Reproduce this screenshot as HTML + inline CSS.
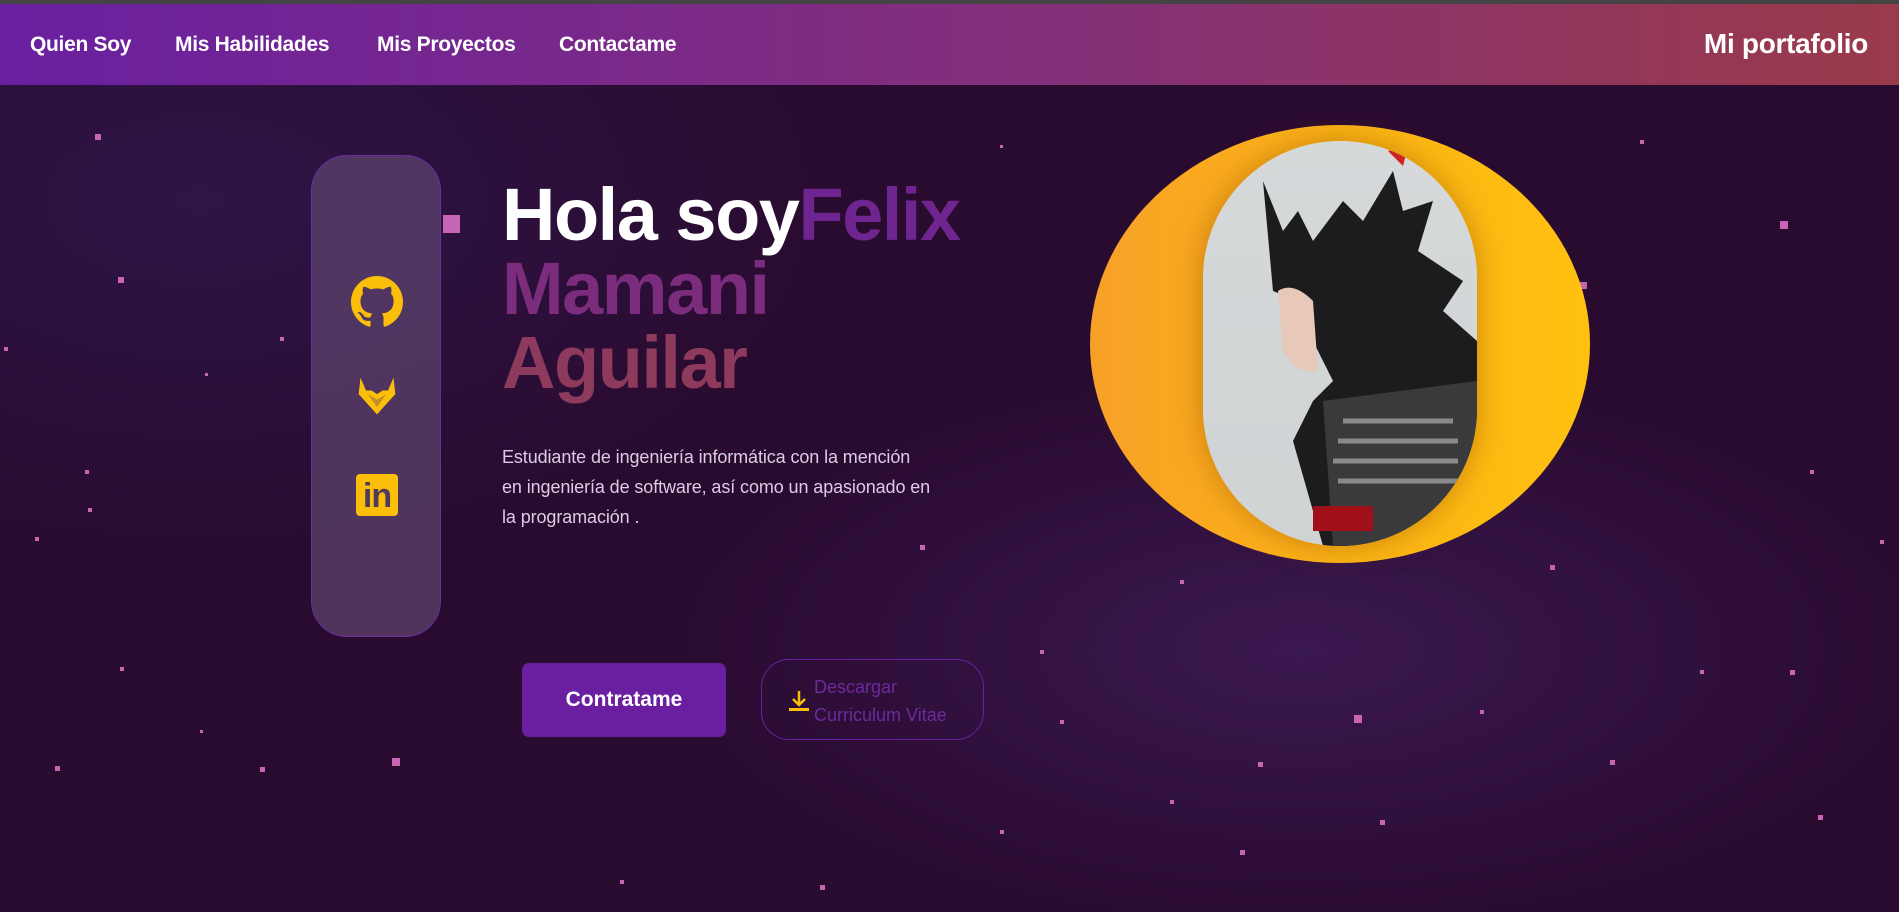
<!DOCTYPE html>
<html><head><meta charset="utf-8"><style>
*{margin:0;padding:0;box-sizing:border-box}
body{width:1899px;height:912px;overflow:hidden;font-family:"Liberation Sans",sans-serif;background:radial-gradient(ellipse 900px 500px at 200px 200px,#2e1547 0%,rgba(46,21,71,0) 70%),radial-gradient(ellipse 900px 400px at 1300px 650px,#3a1850 0%,rgba(58,24,80,0) 70%),#2a0b30;position:relative}
.top{position:absolute;left:0;top:0;width:1899px;height:4px;background:#444}
nav{position:absolute;left:0;top:4px;width:1899px;height:81px;background:linear-gradient(90deg,#6a1fa0,#84307a 55%,#9a3a4a)}
nav a{position:absolute;top:29px;color:#fff;font-size:21px;font-weight:bold;text-decoration:none;letter-spacing:-0.3px}
nav .brand{right:31px;top:24px;font-size:28px}
.s{position:absolute;background:#c864b4}
.card{position:absolute;left:311px;top:155px;width:130px;height:482px;border-radius:36px;background:rgba(110,85,125,.55);border:1px solid #6b2ea0}
.h{position:absolute;left:502px;top:178px;font-size:74px;font-weight:bold;line-height:74px;color:#fff;letter-spacing:-1.5px}
.g1{color:#6f2590}.g2{color:#7c2c7c}.g3{color:#8e3a5c}
.p{position:absolute;left:502px;top:442px;width:470px;font-size:18px;line-height:30px;color:#dccce6;letter-spacing:-0.1px}
.b1{position:absolute;left:522px;top:663px;width:204px;height:74px;border-radius:7px;background:#6a1fa0;color:#fff;font-weight:bold;font-size:21px;text-align:center;line-height:74px}
.b2{position:absolute;left:761px;top:659px;width:223px;height:81px;border-radius:28px;border:1px solid #6a1fa0;color:#6c2a9c;font-size:18px;line-height:28px;padding:13px 0 0 52px}
.circ{position:absolute;left:1090px;top:125px;width:500px;height:438px;border-radius:50%;background:linear-gradient(90deg,#f7a028,#fdb515 50%,#ffc010)}
.pill{position:absolute;left:1203px;top:141px;width:274px;height:405px;border-radius:137px;overflow:hidden;background:linear-gradient(180deg,#d6d9da,#cfd3d4);box-shadow:0 0 30px rgba(150,80,0,.5)}
</style></head><body>
<div class="top"></div>
<nav><a style="left:30px">Quien Soy</a><a style="left:175px">Mis Habilidades</a><a style="left:377px">Mis Proyectos</a><a style="left:559px">Contactame</a><a class="brand">Mi portafolio</a></nav>
<div class="s" style="left:95px;top:134px;width:6px;height:6px"></div>
<div class="s" style="left:118px;top:277px;width:6px;height:6px"></div>
<div class="s" style="left:443px;top:215px;width:17px;height:18px"></div>
<div class="s" style="left:1780px;top:221px;width:8px;height:8px"></div>
<div class="s" style="left:1580px;top:282px;width:7px;height:7px"></div>
<div class="s" style="left:55px;top:766px;width:5px;height:5px"></div>
<div class="s" style="left:392px;top:758px;width:8px;height:8px"></div>
<div class="s" style="left:260px;top:767px;width:5px;height:5px"></div>
<div class="s" style="left:1354px;top:715px;width:8px;height:8px"></div>
<div class="s" style="left:1258px;top:762px;width:5px;height:5px"></div>
<div class="s" style="left:1550px;top:565px;width:5px;height:5px"></div>
<div class="s" style="left:1790px;top:670px;width:5px;height:5px"></div>
<div class="s" style="left:1700px;top:670px;width:4px;height:4px"></div>
<div class="s" style="left:1610px;top:760px;width:5px;height:5px"></div>
<div class="s" style="left:1240px;top:850px;width:5px;height:5px"></div>
<div class="s" style="left:1380px;top:820px;width:5px;height:5px"></div>
<div class="s" style="left:1818px;top:815px;width:5px;height:5px"></div>
<div class="s" style="left:1480px;top:710px;width:4px;height:4px"></div>
<div class="s" style="left:1180px;top:580px;width:4px;height:4px"></div>
<div class="s" style="left:1170px;top:800px;width:4px;height:4px"></div>
<div class="s" style="left:1040px;top:650px;width:4px;height:4px"></div>
<div class="s" style="left:120px;top:667px;width:4px;height:4px"></div>
<div class="s" style="left:35px;top:537px;width:4px;height:4px"></div>
<div class="s" style="left:85px;top:470px;width:4px;height:4px"></div>
<div class="s" style="left:200px;top:730px;width:3px;height:3px"></div>
<div class="s" style="left:280px;top:337px;width:4px;height:4px"></div>
<div class="s" style="left:205px;top:373px;width:3px;height:3px"></div>
<div class="s" style="left:4px;top:347px;width:4px;height:4px"></div>
<div class="s" style="left:88px;top:508px;width:4px;height:4px"></div>
<div class="s" style="left:920px;top:545px;width:5px;height:5px"></div>
<div class="s" style="left:1000px;top:145px;width:3px;height:3px"></div>
<div class="s" style="left:1060px;top:720px;width:4px;height:4px"></div>
<div class="s" style="left:1640px;top:140px;width:4px;height:4px"></div>
<div class="s" style="left:1810px;top:470px;width:4px;height:4px"></div>
<div class="s" style="left:1880px;top:540px;width:4px;height:4px"></div>
<div class="s" style="left:620px;top:880px;width:4px;height:4px"></div>
<div class="s" style="left:820px;top:885px;width:5px;height:5px"></div>
<div class="s" style="left:1000px;top:830px;width:4px;height:4px"></div>
<div class="card">
<svg style="position:absolute;left:39px;top:120px" width="52" height="52" viewBox="0 0 16 16"><path fill="#fbbf0a" d="M8 0C3.58 0 0 3.58 0 8c0 3.54 2.29 6.53 5.47 7.59.4.07.55-.17.55-.38 0-.19-.01-.82-.01-1.49-2.01.37-2.53-.49-2.69-.94-.09-.23-.48-.94-.82-1.130-.28-.15-.68-.52-.01-.53.63-.01 1.08.58 1.23.82.72 1.21 1.87.87 2.33.66.07-.52.28-.87.51-1.07-1.78-.2-3.64-.89-3.64-3.95 0-.87.31-1.59.82-2.15-.08-.2-.36-1.02.08-2.12 0 0 .67-.21 2.2.82.64-.18 1.32-.27 2-.27.68 0 1.36.09 2 .27 1.53-1.04 2.2-.82 2.2-.82.44 1.1.16 1.92.08 2.12.51.56.82 1.27.82 2.15 0 3.07-1.87 3.75-3.65 3.95.29.25.54.73.54 1.48 0 1.07-.01 1.93-.01 2.2 0 .21.15.46.55.38A8.01 8.01 0 0016 8c0-4.42-3.58-8-8-8z"/></svg>
<svg style="position:absolute;left:43px;top:218px" width="44" height="44" viewBox="0 0 24 24"><path fill="#fbbf0a" d="M3 2l3 7h3l3 2 3-2h3l3-7 1 9-10 11L2 11z"/><path fill="#4e3a5a" d="M7 11l5 3 5-3-5 7z" opacity=".35"/></svg>
<div style="position:absolute;left:44px;top:318px;width:42px;height:42px;background:#fbbf0a;border-radius:4px;color:#4e3a5a;font-weight:bold;font-size:34px;line-height:44px;text-align:center;letter-spacing:-1px">in</div>
</div>
<div class="h">Hola soy<span class="g1">Felix</span><br><span class="g2">Mamani</span><br><span class="g3">Aguilar</span></div>
<div class="p">Estudiante de ingeniería informática con la mención<br>en ingeniería de software, así como un apasionado en<br>la programación .</div>
<div class="b1">Contratame</div>
<div class="b2"><svg style="position:absolute;left:27px;top:30px" width="20" height="22" viewBox="0 0 20 22"><path d="M10 1v13M4 9l6 6 6-6" stroke="#fbbf0a" stroke-width="2.5" fill="none"/><rect x="0" y="18" width="20" height="3" fill="#fbbf0a"/></svg>Descargar<br>Curriculum Vitae</div>
<div class="circ"></div>
<div class="pill">
<svg width="274" height="405" viewBox="0 0 274 405">
<path d="M60 40 L80 90 L95 70 L110 100 L140 60 L160 80 L190 30 L200 70 L230 60 L215 110 L260 140 L240 170 L274 200 L274 405 L120 405 L90 300 L110 260 L130 240 L110 200 L95 160 L70 150 Z" fill="#1c1c1e"/>
<path d="M120 260 L274 240 L274 405 L130 405 Z" fill="#3a3a3c"/>
<path d="M140 280h110M135 300h120M130 320h125M135 340h120" stroke="#8a8a8a" stroke-width="5"/>
<path d="M75 150 Q90 140 110 160 L115 230 Q95 235 80 210 Z" fill="#e8c8b8"/>
<path d="M110 365h60v25h-60z" fill="#a01018"/>
<path d="M185 10 L205 5 L200 25 Z" fill="#d02020"/>
</svg>
</div>
</body></html>
